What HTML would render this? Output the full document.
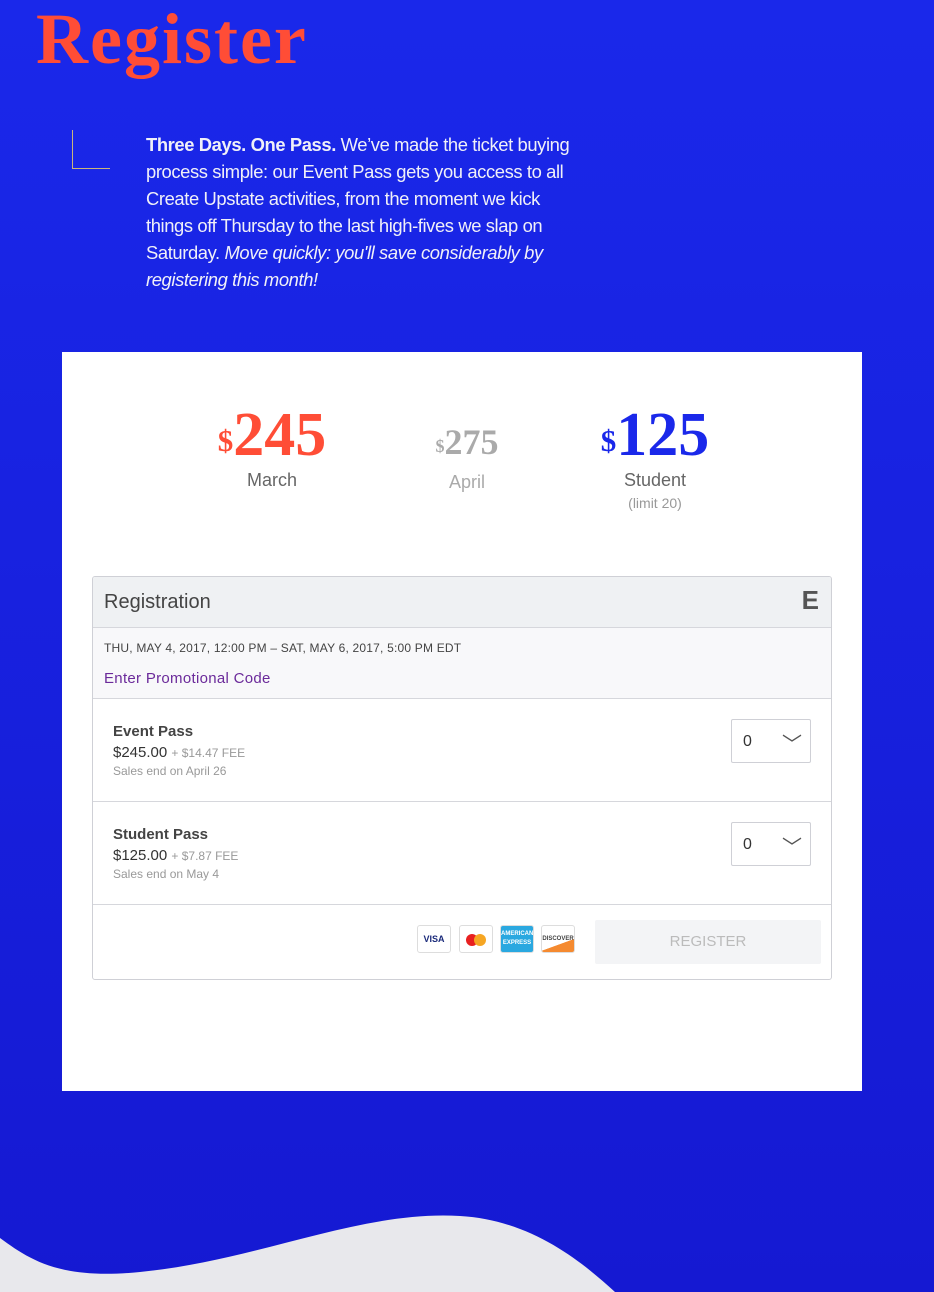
<!DOCTYPE html>
<html><head><meta charset="utf-8"><style>
*{margin:0;padding:0;box-sizing:border-box}
body{width:934px;height:1292px;overflow:hidden;background:linear-gradient(#1a28ea,#1519d2);font-family:"Liberation Sans",sans-serif;position:relative}
.title{position:absolute;left:36px;top:-2px;font-family:"Liberation Serif",serif;font-weight:bold;font-size:72px;color:#ff4d36;letter-spacing:2px}
.corner{position:absolute;left:72px;top:130px;width:38px;height:39px;border-left:1px solid #c9b57a;border-bottom:1px solid #c9b57a}
.intro{position:absolute;left:146px;top:131px;width:440px;color:#f0f0f8;font-size:18.4px;line-height:27px;letter-spacing:-0.4px}
.card{position:absolute;left:62px;top:352px;width:800px;height:739px;background:#fff}
.price{position:absolute;text-align:center;font-family:"Liberation Serif",serif;font-weight:bold}
.price sup{font-size:0.5em;vertical-align:top;position:relative;top:0.2em}
.lbl{font-family:"Liberation Sans",sans-serif;font-weight:normal;font-size:18px;line-height:24px;color:#666}
.reg{position:absolute;left:30px;top:224px;width:740px;height:404px;border:1px solid #cfd0d6;border-radius:3px;overflow:hidden}
.hd{height:51px;background:#eff1f3;border-bottom:1px solid #d6d7dc;padding:14px 11px;font-size:20px;color:#444;position:relative}
.dt{height:71px;background:#f8f8fa;border-bottom:1px solid #d6d7dc;padding:13px 11px;font-size:12px;color:#444;letter-spacing:0.2px}
.tk{height:103px;border-bottom:1px solid #d6d7dc;padding:24px 20px;position:relative;color:#333}
.sel{position:absolute;right:20px;top:20px;width:80px;height:44px;border:1px solid #cfd0d6;border-radius:2px;font-size:16px;padding:13px 11px;color:#333}
.cc{position:absolute;top:20px;width:34px;height:28px;border:1px solid #ddd;border-radius:3px;font-size:9px;font-weight:bold;text-align:center;line-height:26px}
</style></head><body>
<div class="title">Register</div>
<div class="corner"></div>
<div class="intro"><b>Three Days. One Pass.</b> We’ve made the ticket buying process simple: our Event Pass gets you access to all Create Upstate activities, from the moment we kick things off Thursday to the last high-fives we slap on Saturday. <i>Move quickly: you'll save considerably by registering this month!</i></div>
<div class="card">
 <div class="price" style="left:130px;top:50px;width:160px;color:#ff4d36;font-size:62px;line-height:66px"><sup>$</sup>245<div class="lbl">March</div></div>
 <div class="price" style="left:345px;top:70px;width:120px;color:#aaa;font-size:36px;line-height:40px"><sup>$</sup>275<div class="lbl" style="color:#aaa;margin-top:8px">April</div></div>
 <div class="price" style="left:515px;top:50px;width:156px;color:#1a28ea;font-size:62px;line-height:66px"><sup>$</sup>125<div class="lbl">Student</div><div class="lbl" style="font-size:14px;color:#999;line-height:18px;margin-top:2px">(limit 20)</div></div>
 <div class="reg">
  <div class="hd">Registration<span style="position:absolute;right:12px;top:8px;font-size:26px;font-weight:bold;color:#555">E</span></div>
  <div class="dt">THU, MAY 4, 2017, 12:00 PM – SAT, MAY 6, 2017, 5:00 PM EDT<div style="color:#6b2a9a;font-size:15px;margin-top:15px;letter-spacing:0.3px">Enter Promotional Code</div></div>
  <div class="tk"><div style="font-size:15px;font-weight:bold;color:#444">Event Pass</div><div style="font-size:15px;margin-top:4px">$245.00 <span style="font-size:12px;color:#999">+ $14.47 FEE</span></div><div style="font-size:12px;color:#999;margin-top:3px">Sales end on April 26</div><div class="sel">0<span style="position:absolute;right:8px;top:8px;font-size:20px;color:#555">﹀</span></div></div>
  <div class="tk"><div style="font-size:15px;font-weight:bold;color:#444">Student Pass</div><div style="font-size:15px;margin-top:4px">$125.00 <span style="font-size:12px;color:#999">+ $7.87 FEE</span></div><div style="font-size:12px;color:#999;margin-top:3px">Sales end on May 4</div><div class="sel">0<span style="position:absolute;right:8px;top:8px;font-size:20px;color:#555">﹀</span></div></div>
  <div style="position:relative;height:75px">
   <div class="cc" style="left:324px;color:#1a2a7a">VISA</div>
   <div class="cc" style="left:366px"><span style="display:inline-block;width:12px;height:12px;border-radius:50%;background:#e82020;vertical-align:middle"></span><span style="display:inline-block;width:12px;height:12px;border-radius:50%;background:#f6a623;margin-left:-4px;vertical-align:middle"></span></div>
   <div class="cc" style="left:407px;background:#2aa8e0;color:#fff;font-size:6px;line-height:9px;padding-top:4px">AMERICAN<br>EXPRESS</div>
   <div class="cc" style="left:448px;color:#444;font-size:6px;background:linear-gradient(160deg,#fff 65%,#f58a30 66%)">DISCOVER</div>
   <div style="position:absolute;left:502px;top:15px;width:226px;height:44px;background:#f3f4f6;border-radius:2px;color:#bbb;font-size:15px;text-align:center;line-height:44px">REGISTER</div>
  </div>
 </div>
</div>
<svg style="position:absolute;left:0;top:1200px" width="934" height="92"><path d="M0 38 C30 60 60 80 140 72 C260 60 360 10 460 16 C530 20 580 60 615 92 L0 92Z" fill="#e8e8ec"/></svg>
</body></html>
